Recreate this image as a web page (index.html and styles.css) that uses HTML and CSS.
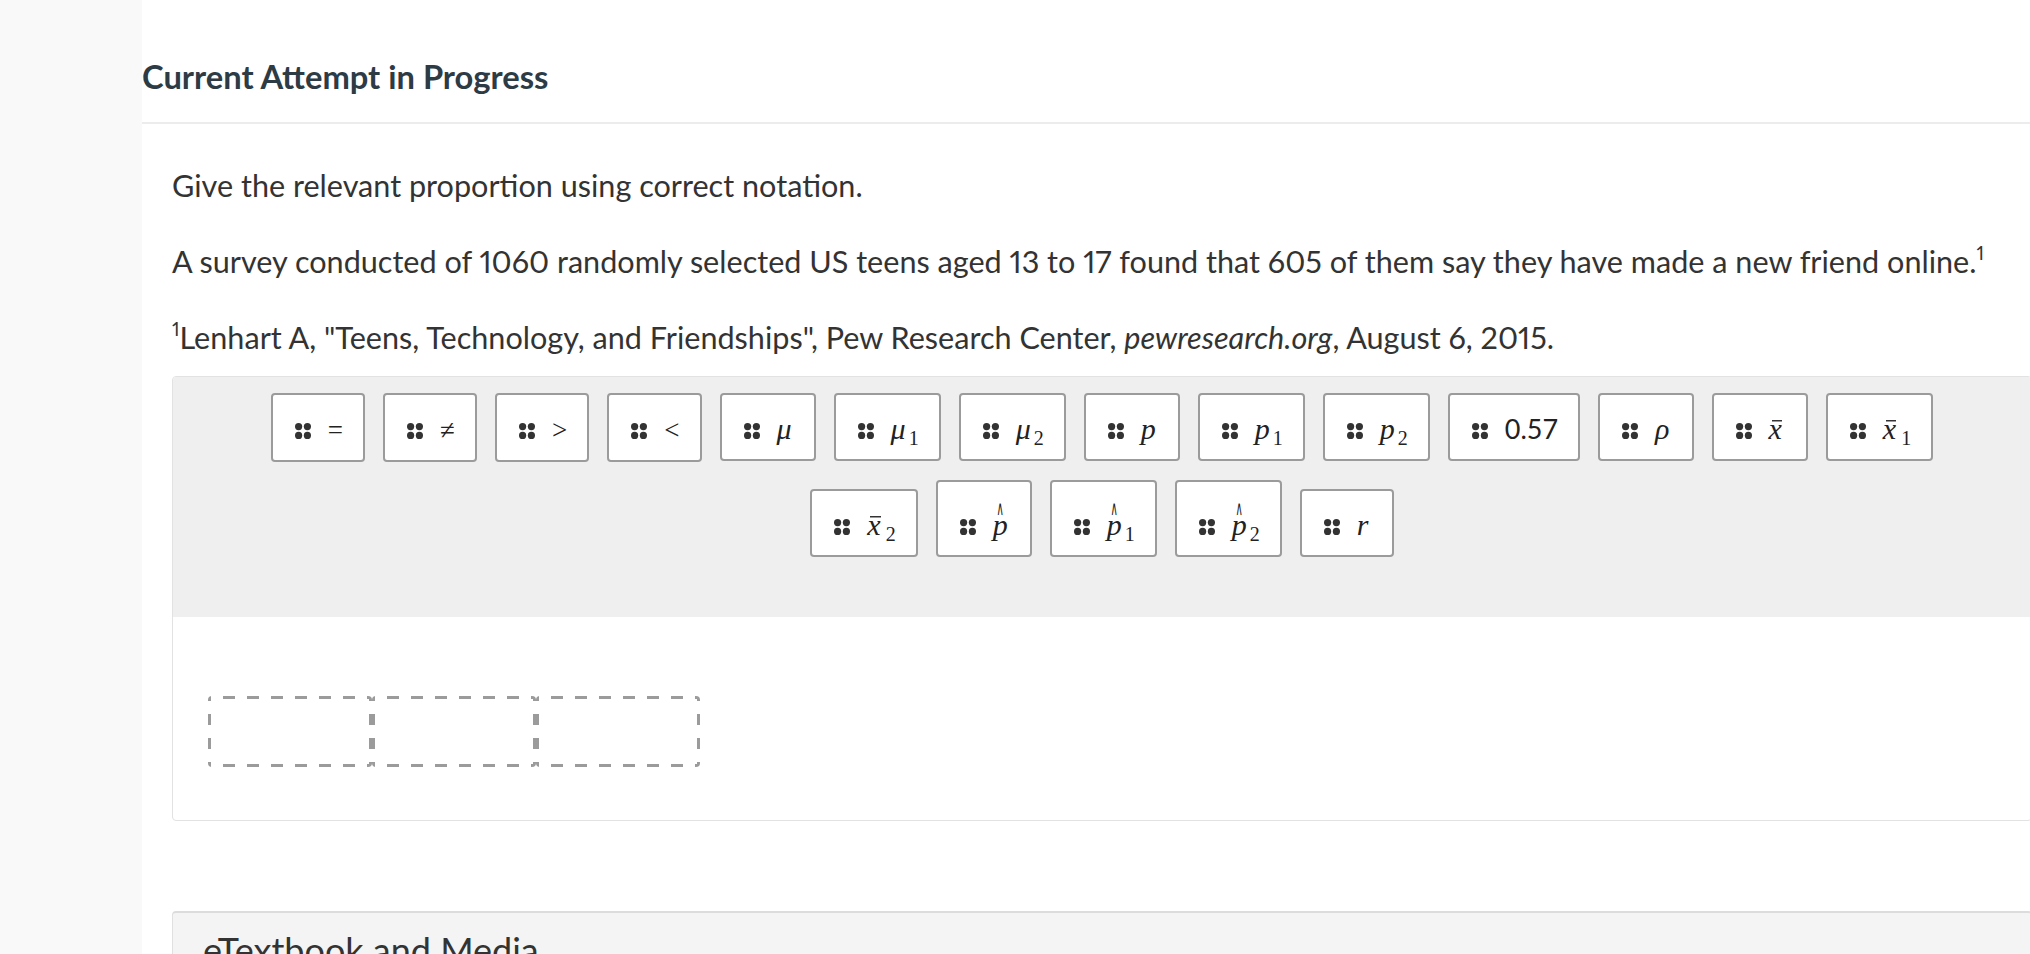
FILE: index.html
```html
<!DOCTYPE html>
<html lang="en">

<head>
    <meta charset="UTF-8">
    <meta name="viewport" content="width=device-width, initial-scale=1.0">
    <title>Current Attempt in Progress</title>
    <link rel="stylesheet" href="styles.css">
</head>

<body>
    <div class="page">
        <aside class="rail"></aside>

        <main class="main">
            <header class="attempt-head">
                <h1>Current Attempt in Progress</h1>
            </header>

            <section class="question">
                <p>Give the relevant proportion using correct notation.</p>
                <p>A survey conducted of 1060 randomly selected US teens aged 13 to 17 found that 605 of them say they have made a new friend online.<sup>1</sup></p>
                <p class="source"><sup>1</sup>Lenhart A, "Teens, Technology, and Friendships", Pew Research Center, <em>pewresearch.org</em>, August 6, 2015.</p>

                <div class="workspace">
                    <!-- draggable answer tiles -->
                    <div class="palette">
                        <span class="chip"><svg class="grip" viewBox="0 0 16 16"><circle cx="3.6" cy="3.6" r="3.6"/><circle cx="12.4" cy="3.6" r="3.6"/><circle cx="3.6" cy="12.4" r="3.6"/><circle cx="12.4" cy="12.4" r="3.6"/></svg><span class="mo">=</span></span><span class="chip"><svg class="grip" viewBox="0 0 16 16"><circle cx="3.6" cy="3.6" r="3.6"/><circle cx="12.4" cy="3.6" r="3.6"/><circle cx="3.6" cy="12.4" r="3.6"/><circle cx="12.4" cy="12.4" r="3.6"/></svg><span class="mo">≠</span></span><span class="chip"><svg class="grip" viewBox="0 0 16 16"><circle cx="3.6" cy="3.6" r="3.6"/><circle cx="12.4" cy="3.6" r="3.6"/><circle cx="3.6" cy="12.4" r="3.6"/><circle cx="12.4" cy="12.4" r="3.6"/></svg><span class="mo">&gt;</span></span><span class="chip"><svg class="grip" viewBox="0 0 16 16"><circle cx="3.6" cy="3.6" r="3.6"/><circle cx="12.4" cy="3.6" r="3.6"/><circle cx="3.6" cy="12.4" r="3.6"/><circle cx="12.4" cy="12.4" r="3.6"/></svg><span class="mo">&lt;</span></span><span class="chip"><svg class="grip" viewBox="0 0 16 16"><circle cx="3.6" cy="3.6" r="3.6"/><circle cx="12.4" cy="3.6" r="3.6"/><circle cx="3.6" cy="12.4" r="3.6"/><circle cx="12.4" cy="12.4" r="3.6"/></svg><span class="mi">μ</span></span><span class="chip"><svg class="grip" viewBox="0 0 16 16"><circle cx="3.6" cy="3.6" r="3.6"/><circle cx="12.4" cy="3.6" r="3.6"/><circle cx="3.6" cy="12.4" r="3.6"/><circle cx="12.4" cy="12.4" r="3.6"/></svg><span class="mi">μ</span><sub>1</sub></span><span class="chip"><svg class="grip" viewBox="0 0 16 16"><circle cx="3.6" cy="3.6" r="3.6"/><circle cx="12.4" cy="3.6" r="3.6"/><circle cx="3.6" cy="12.4" r="3.6"/><circle cx="12.4" cy="12.4" r="3.6"/></svg><span class="mi">μ</span><sub>2</sub></span><span class="chip"><svg class="grip" viewBox="0 0 16 16"><circle cx="3.6" cy="3.6" r="3.6"/><circle cx="12.4" cy="3.6" r="3.6"/><circle cx="3.6" cy="12.4" r="3.6"/><circle cx="12.4" cy="12.4" r="3.6"/></svg><span class="mi">p</span></span><span class="chip"><svg class="grip" viewBox="0 0 16 16"><circle cx="3.6" cy="3.6" r="3.6"/><circle cx="12.4" cy="3.6" r="3.6"/><circle cx="3.6" cy="12.4" r="3.6"/><circle cx="12.4" cy="12.4" r="3.6"/></svg><span class="mi">p</span><sub>1</sub></span><span class="chip"><svg class="grip" viewBox="0 0 16 16"><circle cx="3.6" cy="3.6" r="3.6"/><circle cx="12.4" cy="3.6" r="3.6"/><circle cx="3.6" cy="12.4" r="3.6"/><circle cx="12.4" cy="12.4" r="3.6"/></svg><span class="mi">p</span><sub>2</sub></span><span class="chip"><svg class="grip" viewBox="0 0 16 16"><circle cx="3.6" cy="3.6" r="3.6"/><circle cx="12.4" cy="3.6" r="3.6"/><circle cx="3.6" cy="12.4" r="3.6"/><circle cx="12.4" cy="12.4" r="3.6"/></svg><span class="num">0.57</span></span><span class="chip"><svg class="grip" viewBox="0 0 16 16"><circle cx="3.6" cy="3.6" r="3.6"/><circle cx="12.4" cy="3.6" r="3.6"/><circle cx="3.6" cy="12.4" r="3.6"/><circle cx="12.4" cy="12.4" r="3.6"/></svg><span class="mi">ρ</span></span><span class="chip"><svg class="grip" viewBox="0 0 16 16"><circle cx="3.6" cy="3.6" r="3.6"/><circle cx="12.4" cy="3.6" r="3.6"/><circle cx="3.6" cy="12.4" r="3.6"/><circle cx="12.4" cy="12.4" r="3.6"/></svg><span class="mi bar">x</span></span><span class="chip"><svg class="grip" viewBox="0 0 16 16"><circle cx="3.6" cy="3.6" r="3.6"/><circle cx="12.4" cy="3.6" r="3.6"/><circle cx="3.6" cy="12.4" r="3.6"/><circle cx="12.4" cy="12.4" r="3.6"/></svg><span class="mi bar">x</span><sub>1</sub></span><span class="chip"><svg class="grip" viewBox="0 0 16 16"><circle cx="3.6" cy="3.6" r="3.6"/><circle cx="12.4" cy="3.6" r="3.6"/><circle cx="3.6" cy="12.4" r="3.6"/><circle cx="12.4" cy="12.4" r="3.6"/></svg><span class="mi bar">x</span><sub>2</sub></span><span class="chip"><svg class="grip" viewBox="0 0 16 16"><circle cx="3.6" cy="3.6" r="3.6"/><circle cx="12.4" cy="3.6" r="3.6"/><circle cx="3.6" cy="12.4" r="3.6"/><circle cx="12.4" cy="12.4" r="3.6"/></svg><span class="mi hat"><span class="acc">∧</span>p</span></span><span class="chip"><svg class="grip" viewBox="0 0 16 16"><circle cx="3.6" cy="3.6" r="3.6"/><circle cx="12.4" cy="3.6" r="3.6"/><circle cx="3.6" cy="12.4" r="3.6"/><circle cx="12.4" cy="12.4" r="3.6"/></svg><span class="mi hat"><span class="acc">∧</span>p</span><sub>1</sub></span><span class="chip"><svg class="grip" viewBox="0 0 16 16"><circle cx="3.6" cy="3.6" r="3.6"/><circle cx="12.4" cy="3.6" r="3.6"/><circle cx="3.6" cy="12.4" r="3.6"/><circle cx="12.4" cy="12.4" r="3.6"/></svg><span class="mi hat"><span class="acc">∧</span>p</span><sub>2</sub></span><span class="chip"><svg class="grip" viewBox="0 0 16 16"><circle cx="3.6" cy="3.6" r="3.6"/><circle cx="12.4" cy="3.6" r="3.6"/><circle cx="3.6" cy="12.4" r="3.6"/><circle cx="12.4" cy="12.4" r="3.6"/></svg><span class="mi">r</span></span>
                    </div>

                    <!-- drop targets -->
                    <div class="answer">
                        <div class="slot"></div>
                        <div class="slot"></div>
                        <div class="slot"></div>
                    </div>
                </div>
            </section>

            <section class="resources">
                <h2>eTextbook and Media</h2>
            </section>
        </main>
    </div>
</body>

</html>
```

FILE: styles.css
```css
html,
body {
    margin: 0;
    padding: 0;
    overflow: hidden;
}

body {
    background-color: #fff;
    font-family: Lato, "Open Sans", Arial, sans-serif;
    color: #333;
}

.page {
    display: flex;
    min-height: 100vh;
}

.rail {
    flex: none;
    width: 142px;
    background-color: #f9f9f9;
}

.main {
    flex: none;
    width: 1890px;
}

.attempt-head {
    padding: 58px 0 26px;
    border-bottom: 2px solid #ececec;
}

.attempt-head h1 {
    margin: 0;
    font-size: 32.7px;
    line-height: 38px;
    font-weight: 700;
    color: #2d3b45;
}

.question {
    padding: 39px 0 0 30px;
}

.question p {
    margin: 0 0 31px;
    font-size: 30.6px;
    line-height: 45px;
    font-variant-numeric: proportional-nums;
}

.question p.source {
    margin-bottom: 16px;
}

.question sup {
    font-size: 19px;
    line-height: 0;
    vertical-align: 13px;
}

.workspace {
    border: 1px solid #e2e2e2;
    border-radius: 4px;
    overflow: hidden;
}

.palette {
    background-color: #efefef;
    padding: 7px 60px 51px;
    text-align: center;
    font-size: 0;
    line-height: 0;
}

.chip {
    display: inline-block;
    box-sizing: border-box;
    min-width: 94px;
    margin: 9px;
    padding: 18px 20px 14px 22px;
    border: 2px solid #9b9b9b;
    border-radius: 4px;
    background-color: #fff;
    font-family: "Liberation Serif", "DejaVu Serif", serif;
    font-size: 30px;
    line-height: 32px;
    color: #222;
    text-align: left;
    white-space: nowrap;
    vertical-align: baseline;
}

.grip {
    width: 16px;
    height: 16px;
    margin-right: 17px;
    fill: #333;
    vertical-align: baseline;
}

.mo {
    font-size: 27px;
    font-style: normal;
}

.mi {
    font-style: italic;
    margin-right: 2px;
}

.num {
    font-family: Lato, sans-serif;
    font-size: 27px;
    line-height: 1;
}

.chip sub {
    font-size: 20px;
    font-style: normal;
    line-height: 0;
    vertical-align: -6px;
    margin-left: 1px;
}

/* overline drawn just above the x-height */
.bar {
    margin-right: 4px;
    background-image: linear-gradient(#333, #333);
    background-repeat: no-repeat;
    background-size: calc(100% - 3px) 1.5px;
    background-position: 3px 8px;
}

.hat {
    display: inline-block;
    text-align: center;
}

/* zero-width box so the wedge never widens the letter under it */
.acc {
    display: block;
    width: 0;
    height: 9px;
    margin: 0 auto;
    text-indent: -7px;
    white-space: nowrap;
    font-family: "DejaVu Sans", sans-serif;
    font-style: normal;
    font-size: 20px;
    line-height: 16px;
    transform: scaleX(0.5);
}

.answer {
    display: flex;
    padding: 79px 0 53px 35px;
}

/* dashed outline with long dashes, as the drop zones use */
.slot {
    box-sizing: border-box;
    width: 164px;
    height: 71px;
    border-radius: 4px;
    background:
        repeating-linear-gradient(90deg, #9b9b9b 0 12px, transparent 12px 24px) -9px 0 / calc(100% + 9px) 3px no-repeat,
        repeating-linear-gradient(90deg, #9b9b9b 0 12px, transparent 12px 24px) -9px 100% / calc(100% + 9px) 3px no-repeat,
        repeating-linear-gradient(180deg, #9b9b9b 0 11px, transparent 11px 24px) 0 -6px / 3px calc(100% + 6px) no-repeat,
        repeating-linear-gradient(180deg, #9b9b9b 0 11px, transparent 11px 24px) 100% -6px / 3px calc(100% + 6px) no-repeat;
}

.resources {
    margin: 90px 0 0 30px;
    padding: 16px 30px;
    background-color: #f4f4f4;
    border: 1px solid #e0e0e0;
    border-top: 2px solid #dcdcdc;
    border-radius: 4px;
}

.resources h2 {
    margin: 0;
    font-size: 36px;
    line-height: 42px;
    font-weight: 400;
    color: #333;
}
```
